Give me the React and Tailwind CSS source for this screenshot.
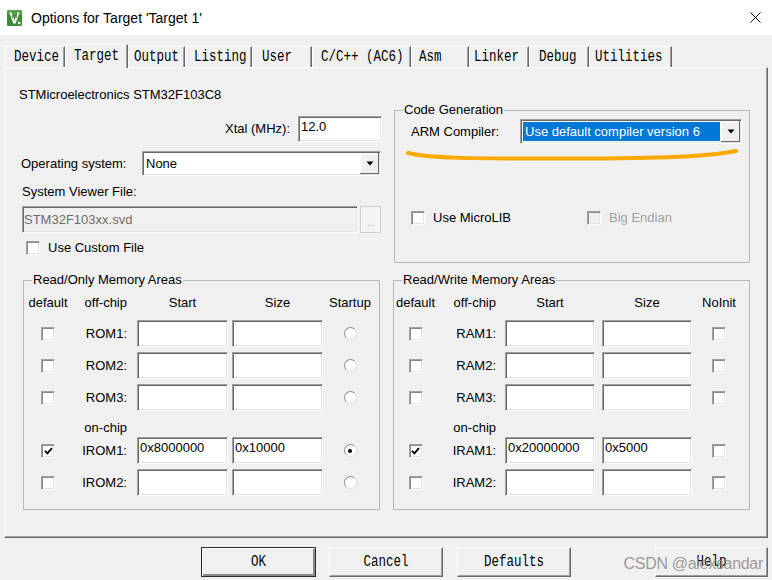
import clsx from "clsx";

const sans = "font-['Liberation_Sans',Arial,sans-serif]";
const mono = "font-['Liberation_Mono','Courier_New',monospace]";
const sunken =
  "border border-t-[#a0a0a0] border-l-[#a0a0a0] border-r-white border-b-white shadow-[inset_1px_1px_0_#696969,inset_-1px_-1px_0_#e3e3e3] p-[1px]";

const tabs = [
  { label: "Device", cls: "w-[61px] pl-[9px]" },
  { label: "Target", cls: "w-[63px] pl-[8px]", active: true },
  { label: "Output", cls: "w-[57px] pl-[5px]" },
  { label: "Listing", cls: "w-[67px] pl-[8px]" },
  { label: "User", cls: "w-[60px] pl-[9px]" },
  { label: "C/C++ (AC6)", cls: "w-[99px] pl-[8px]" },
  { label: "Asm", cls: "w-[58px] pl-[7px]" },
  { label: "Linker", cls: "w-[60px] pl-[4px]" },
  { label: "Debug", cls: "w-[60px] pl-[9px]" },
  { label: "Utilities", cls: "w-[83px] pl-[5px]" },
];

function MonoText({ children }) {
  return <span className={`inline-block scale-y-[1.3] text-[12.5px] leading-[14px] ${mono}`}>{children}</span>;
}

function Checkbox({ checked, disabled }) {
  return (
    <div
      className={clsx(
        "w-[14px] h-[14px] shrink-0 flex items-center justify-center border border-t-[#a0a0a0] border-l-[#a0a0a0] border-r-white border-b-white shadow-[inset_1px_1px_0_#8a8a8a,inset_-1px_-1px_0_#e3e3e3]",
        disabled ? "bg-[#f0f0f0]" : "bg-white"
      )}
    >
      {checked && (
        <svg width="9" height="8" viewBox="0 0 9 8">
          <path d="M1 3.8 L3.4 6.4 L8 1.2" fill="none" stroke="#000" strokeWidth="1.8" />
        </svg>
      )}
    </div>
  );
}

function Radio({ checked }) {
  return (
    <div className="w-[13px] h-[13px] rounded-full bg-white border border-[#8c8c8c] border-r-[#dcdcdc] border-b-[#dcdcdc] flex items-center justify-center">
      {checked && <div className="w-[4px] h-[4px] rounded-full bg-black" />}
    </div>
  );
}

function Arrow() {
  return (
    <div className="w-[19px] h-full shrink-0 bg-[#f0f0f0] flex items-center justify-center shadow-[inset_-1px_-1px_0_#696969,inset_1px_1px_0_#fff]">
      <svg width="8" height="5" viewBox="0 0 8 5">
        <path d="M0.5 0.5 H7.5 L4 4.5 Z" fill="#000" />
      </svg>
    </div>
  );
}

function TextBox({ value, className }) {
  return (
    <div className={clsx("bg-white h-[27px]", sunken, className)}>
      <div className="px-[1px] pt-[1px] leading-[15px]">{value}</div>
    </div>
  );
}

function MemRow({ cols, row, trail }) {
  return (
    <div className="flex items-center h-[27px]">
      <div className={clsx("flex justify-center", cols.a)}>
        <Checkbox checked={row.checked} />
      </div>
      <div className={clsx("text-right", cols.b)}>{row.label}</div>
      <TextBox value={row.start} className={cols.c} />
      <div className={cols.gap} />
      <TextBox value={row.size} className={cols.c} />
      <div className={clsx("flex justify-center", cols.e)}>
        {trail === "radio" ? <Radio checked={row.checked} /> : <Checkbox />}
      </div>
    </div>
  );
}

function MemGroup({ title, cols, last, trail, rows }) {
  return (
    <fieldset className="w-[357px] h-[237px] border border-[#b9b9b9]">
      <legend className="ml-[8px] px-[1px] leading-[14px]">{title}</legend>
      <div className="flex items-center mt-[8px] h-[16px] leading-[16px]">
        <div className={clsx("text-center", cols.a)}>default</div>
        <div className={clsx("text-right", cols.b)}>off-chip</div>
        <div className={clsx("text-center", cols.c)}>Start</div>
        <div className={cols.gap} />
        <div className={clsx("text-center", cols.c)}>Size</div>
        <div className={clsx("text-center", cols.e)}>{last}</div>
      </div>
      <div className="mt-[9px]">
        <MemRow cols={cols} row={rows[0]} trail={trail} />
      </div>
      <div className="mt-[5px]">
        <MemRow cols={cols} row={rows[1]} trail={trail} />
      </div>
      <div className="mt-[5px]">
        <MemRow cols={cols} row={rows[2]} trail={trail} />
      </div>
      <div className="flex mt-[9px] h-[16px] leading-[16px]">
        <div className={cols.a} />
        <div className={clsx("text-right", cols.b)}>on-chip</div>
      </div>
      <div className="mt-[1px]">
        <MemRow cols={cols} row={rows[3]} trail={trail} />
      </div>
      <div className="mt-[5px]">
        <MemRow cols={cols} row={rows[4]} trail={trail} />
      </div>
    </fieldset>
  );
}

const leftCols = { a: "w-[48px]", b: "w-[65px] pr-[10px]", c: "w-[91px]", gap: "w-[4px]", e: "w-[54px]" };
const rightCols = { a: "w-[43px]", b: "w-[68px] pr-[9px]", c: "w-[90px]", gap: "w-[7px]", e: "w-[54px]" };

function Button({ label, primary, className }) {
  return (
    <div
      className={clsx(
        "h-[30px] flex items-center justify-center bg-[#f0f0f0]",
        primary
          ? "border border-[#2a2a2a] shadow-[inset_1px_1px_0_#fff,inset_-2px_-2px_0_#8a8a8a]"
          : "border border-t-white border-l-white border-r-[#696969] border-b-[#696969] shadow-[inset_-1px_-1px_0_#a0a0a0]",
        className
      )}
    >
      <MonoText>{label}</MonoText>
    </div>
  );
}

export default function App() {
  return (
    <div className={`relative w-[772px] h-[580px] overflow-hidden bg-[#f0f0f0] text-black text-[13px] ${sans}`}>
      {/* title bar */}
      <div className="h-[35px] bg-white flex items-center">
        <svg className="ml-[7px]" width="15" height="16" viewBox="0 0 15 16">
          <rect width="15" height="16" rx="1.5" fill="#3c8b3a" />
          <rect width="15" height="5" rx="1.5" fill="#4fa24a" />
          <path d="M2.5 2.5h2.4l2.6 8.2 2.6-8.2h2.4l-3.8 11H6.3z" fill="#fff" />
          <path d="M5.6 3v5.2M9.4 3v5.2" stroke="#3c8b3a" strokeWidth="0.9" />
          <circle cx="12.2" cy="13" r="1.3" fill="#fff" />
        </svg>
        <div className="ml-[9px] text-[14px] leading-[18px]">Options for Target 'Target 1'</div>
        <svg className="ml-auto mr-[11px]" width="11" height="11" viewBox="0 0 11 11">
          <path d="M0.5 0.5 L10.5 10.5 M10.5 0.5 L0.5 10.5" stroke="#000" strokeWidth="1" />
        </svg>
      </div>

      {/* tabs */}
      <div className="flex items-end pl-[4px] pt-[9px]">
        {tabs.map((t) =>
          t.active ? (
            <div
              key={t.label}
              className={clsx(
                "relative z-10 -mb-px h-[24px] pb-[2px] flex items-center bg-[#f0f0f0] border-t border-l border-r border-t-white border-l-white border-r-[#696969] shadow-[inset_-1px_0_0_#a0a0a0]",
                t.cls
              )}
            >
              <MonoText>{t.label}</MonoText>
            </div>
          ) : (
            <div
              key={t.label}
              className={clsx(
                "h-[21px] flex items-center bg-[#f0f0f0] border-t border-l border-r border-t-white border-l-white border-r-[#696969] shadow-[inset_-1px_0_0_#a0a0a0]",
                t.cls
              )}
            >
              <MonoText>{t.label}</MonoText>
            </div>
          )
        )}
      </div>

      {/* panel */}
      <div className="ml-[4px] w-[764px] h-[471px] flex flex-col border border-t-white border-l-white border-r-[#696969] border-b-[#696969] shadow-[inset_-1px_-1px_0_#a0a0a0]">
        <div className="flex h-[205px]">
          <div className="w-[385px] flex flex-col">
            <div className="mt-[19px] pl-[14px] h-[16px] leading-[16px]">STMicroelectronics STM32F103C8</div>
            <div className="mt-[13px] h-[26px] flex items-center justify-end pr-[8px]">
              <span>Xtal (MHz):</span>
              <TextBox value="12.0" className="ml-[8px] w-[84px] !h-[26px]" />
            </div>
            <div className="mt-[9px] h-[25px] pl-[16px] flex items-center">
              <div className="w-[121px]">Operating system:</div>
              <div className={clsx("w-[239px] h-[25px] bg-white flex", sunken)}>
                <div className="flex-1 flex items-center pl-[2px]">None</div>
                <Arrow />
              </div>
            </div>
            <div className="mt-[8px] pl-[17px] h-[16px] leading-[16px]">System Viewer File:</div>
            <div className="mt-[6px] h-[27px] pl-[17px] flex">
              <div className={clsx("w-[336px] h-[27px] bg-[#f0f0f0] text-[#6d6d6d] flex items-center pl-[1px] pb-[1px]", sunken)}>
                STM32F103xx.svd
              </div>
              <div className="ml-[2px] w-[21px] h-[27px] bg-[#f4f4f4] border border-[#cfcfcf] flex items-end justify-center pb-[4px] text-[#9a9a9a] text-[9px] leading-[9px]">
                ...
              </div>
            </div>
            <div className="mt-[8px] h-[14px] pl-[21px] flex items-center">
              <Checkbox />
              <span className="ml-[8px]">Use Custom File</span>
            </div>
          </div>

          <fieldset className="ml-[4px] mt-[35px] w-[356px] h-[160px] border border-[#b9b9b9]">
            <legend className="ml-[8px] px-[1px] leading-[14px]">Code Generation</legend>
            <div className="mt-[2px] h-[25px] pl-[16px] flex items-center">
              <div className="w-[109px]">ARM Compiler:</div>
              <div className={clsx("w-[222px] h-[25px] bg-white flex", sunken)}>
                <div className="flex-1 m-[1px] bg-[#0078d7] text-white flex items-center pl-[2px]">
                  Use default compiler version 6
                </div>
                <Arrow />
              </div>
            </div>
            <svg className="block ml-[10px] mt-[4px]" width="336" height="16" viewBox="0 0 336 16">
              <path
                d="M3 5 C 22 10 60 10.5 150 10.5 C 240 10.5 300 9.5 331 3"
                fill="none"
                stroke="#fba900"
                strokeWidth="4"
                strokeLinecap="round"
              />
            </svg>
            <div className="mt-[46px] h-[15px] pl-[16px] flex items-center">
              <div className="w-[176px] flex items-center">
                <Checkbox />
                <span className="ml-[8px]">Use MicroLIB</span>
              </div>
              <Checkbox disabled />
              <span className="ml-[8px] text-[#a0a0a0]">Big Endian</span>
            </div>
          </fieldset>
        </div>

        <div className="flex pl-[18px] gap-[13px]">
          <MemGroup
            title="Read/Only Memory Areas"
            cols={leftCols}
            last="Startup"
            trail="radio"
            rows={[
              { label: "ROM1:" },
              { label: "ROM2:" },
              { label: "ROM3:" },
              { label: "IROM1:", start: "0x8000000", size: "0x10000", checked: true },
              { label: "IROM2:" },
            ]}
          />
          <MemGroup
            title="Read/Write Memory Areas"
            cols={rightCols}
            last="NoInit"
            trail="check"
            rows={[
              { label: "RAM1:" },
              { label: "RAM2:" },
              { label: "RAM3:" },
              { label: "IRAM1:", start: "0x20000000", size: "0x5000", checked: true },
              { label: "IRAM2:" },
            ]}
          />
        </div>
      </div>

      {/* buttons */}
      <div className="flex mt-[9px] pl-[201px]">
        <Button label="OK" primary className="w-[115px]" />
        <Button label="Cancel" className="ml-[13px] w-[114px]" />
        <Button label="Defaults" className="ml-[14px] w-[114px]" />
        <Button label="Help" className="ml-[84px] w-[113px]" />
      </div>

      <div className="absolute right-[9px] bottom-[8px] text-[16px] leading-[17px] tracking-[-0.3px] text-[#8a8a8a]/85">
        CSDN @alexsandar
      </div>
    </div>
  );
}
